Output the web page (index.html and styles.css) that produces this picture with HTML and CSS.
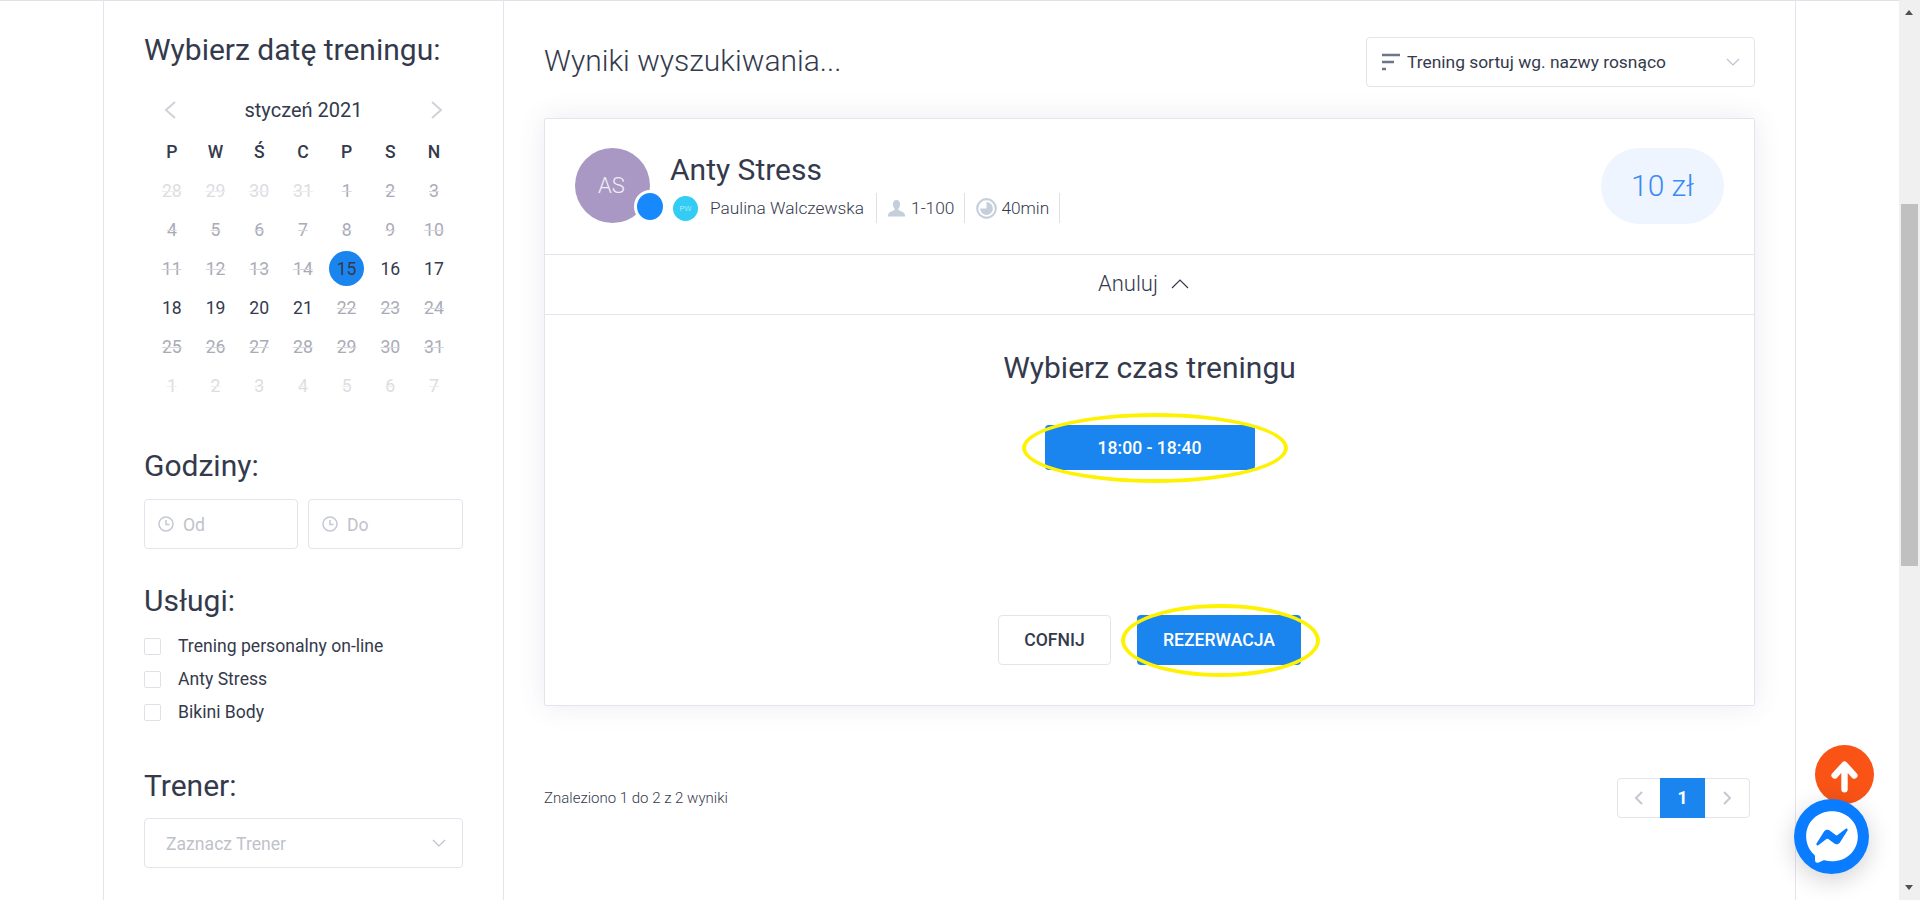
FILE: index.html
```html
<!DOCTYPE html>
<html lang="pl">
<head>
    <meta charset="UTF-8">
    <meta name="viewport" content="width=device-width, initial-scale=1.0">
    <title>Wyniki wyszukiwania</title>
    <link rel="stylesheet" href="styles.css">
</head>
<body>
    <div class="page">
        <div class="layout">
            <aside class="sidebar">
                <h2 class="side-title">Wybierz datę treningu:</h2>

                <div class="month-row">
                    <svg class="month-arrow" viewBox="0 0 14 20"><path d="M12 2 3 10l9 8"/></svg>
                    <span>styczeń 2021</span>
                    <svg class="month-arrow" viewBox="0 0 14 20"><path d="M2 2l9 8-9 8"/></svg>
                </div>

                <div class="calendar">
                    <b>P</b><b>W</b><b>Ś</b><b>C</b><b>P</b><b>S</b><b>N</b>
                    <s class="out">28</s><s class="out">29</s><s class="out">30</s><s class="out">31</s><s>1</s><s>2</s><s>3</s>
                    <s>4</s><s>5</s><s>6</s><s>7</s><s>8</s><s>9</s><s>10</s>
                    <s>11</s><s>12</s><s>13</s><s>14</s><span class="today"><i>15</i></span><span>16</span><span>17</span>
                    <span>18</span><span>19</span><span>20</span><span>21</span><s>22</s><s>23</s><s>24</s>
                    <s>25</s><s>26</s><s>27</s><s>28</s><s>29</s><s>30</s><s>31</s>
                    <s class="out">1</s><s class="out">2</s><s class="out">3</s><s class="out">4</s><s class="out">5</s><s class="out">6</s><s class="out">7</s>
                </div>

                <h2 class="side-title hours-title">Godziny:</h2>
                <div class="hours">
                    <div class="field">
                        <svg class="clock-icon" viewBox="0 0 16 16"><circle cx="8" cy="8" r="7"/><path d="M8 4v4.500h3.500"/></svg>
                        <span>Od</span>
                    </div>
                    <div class="field">
                        <svg class="clock-icon" viewBox="0 0 16 16"><circle cx="8" cy="8" r="7"/><path d="M8 4v4.500h3.500"/></svg>
                        <span>Do</span>
                    </div>
                </div>

                <h2 class="side-title services-title">Usługi:</h2>
                <ul class="services">
                    <li><span class="check"></span>Trening personalny on-line</li>
                    <li><span class="check"></span>Anty Stress</li>
                    <li><span class="check"></span>Bikini Body</li>
                </ul>

                <h2 class="side-title trainer-title">Trener:</h2>
                <div class="field trainer-select">
                    <span>Zaznacz Trener</span>
                    <svg class="chevron" viewBox="0 0 14 8"><path d="M1 1l6 6 6-6"/></svg>
                </div>
            </aside>

            <main class="results">
                <div class="results-head">
                    <h1>Wyniki wyszukiwania...</h1>
                    <div class="sort-box">
                        <svg class="sort-icon" viewBox="0 0 18 20"><path d="M0 3h18M0 10h12M0 17h4"/></svg>
                        <span>Trening sortuj wg. nazwy rosnąco</span>
                        <svg class="chevron" viewBox="0 0 14 8"><path d="M1 1l6 6 6-6"/></svg>
                    </div>
                </div>

                <section class="card">
                    <header class="card-head">
                        <div class="avatar">AS<span class="avatar-dot"></span></div>
                        <div class="card-info">
                            <h3>Anty Stress</h3>
                            <div class="meta">
                                <div class="meta-item trainer">
                                    <span class="trainer-badge">PW</span>
                                    <span>Paulina Walczewska</span>
                                </div>
                                <div class="meta-item">
                                    <svg class="person-icon" viewBox="0 0 16 16"><path d="M8 0c2.300 0 3.400 1.700 3.400 3.900 0 1.700-.8 3.100-1.500 3.900v1.700c0 .7 5.600 1.500 6.100 4.500v1.500H0v-1.500c.5-3 6.100-3.800 6.100-4.500V7.800C5.400 7 4.600 5.600 4.600 3.900 4.600 1.700 5.700 0 8 0z"/></svg>
                                    <span>1-100</span>
                                </div>
                                <div class="meta-item">
                                    <svg class="pie-icon" viewBox="0 0 18 18"><circle class="pie-ring" cx="9" cy="9" r="8"/><path class="pie-fill" d="M9 3.500a5.500 5.500 0 1 1-5.500 5.500h5.500z"/></svg>
                                    <span>40min</span>
                                </div>
                            </div>
                        </div>
                        <div class="price">10 zł</div>
                    </header>

                    <div class="cancel-row">
                        <span>Anuluj</span>
                        <svg viewBox="0 0 18 10"><path d="M1 9l8-8 8 8"/></svg>
                    </div>

                    <div class="card-body">
                        <h4>Wybierz czas treningu</h4>
                        <div class="time-slot">
                            <button class="btn-primary slot-btn">18:00 - 18:40</button>
                            <span class="mark mark-slot"></span>
                        </div>
                        <div class="actions">
                            <button class="btn-outline">COFNIJ</button>
                            <div class="reserve">
                                <button class="btn-primary reserve-btn">REZERWACJA</button>
                                <span class="mark mark-reserve"></span>
                            </div>
                        </div>
                    </div>
                </section>

                <div class="results-foot">
                    <span class="found">Znaleziono 1 do 2 z 2 wyniki</span>
                    <div class="pager">
                        <span class="pager-item prev"><svg viewBox="0 0 10 14"><path d="M8 1 2 7l6 6"/></svg></span>
                        <span class="pager-item active">1</span>
                        <span class="pager-item"><svg viewBox="0 0 10 14"><path d="M2 1l6 6-6 6"/></svg></span>
                    </div>
                </div>
            </main>
        </div>

        <a class="to-top">
            <svg viewBox="0 0 60 60"><path d="M30 45V20M20 31l10-11 10 11"/></svg>
        </a>
        <a class="messenger">
            <svg viewBox="0 0 24 24"><path d="M12 2C6.360 2 2 6.130 2 11.700c0 2.910 1.190 5.440 3.140 7.170.160.130.260.350.270.570l.050 1.780c.040.570.600.940 1.130.710l1.980-.870c.170-.060.360-.090.530-.060.900.270 1.900.400 2.900.400 5.640 0 10-4.130 10-9.700S17.640 2 12 2zm6 7.460-2.930 4.670c-.470.730-1.470.920-2.160.370l-2.340-1.730a.6.6 0 0 0-.72 0l-3.160 2.400c-.420.330-.970-.170-.690-.610l2.930-4.670c.470-.730 1.470-.920 2.160-.400l2.340 1.760a.6.6 0 0 0 .72 0l3.160-2.400c.420-.330.970.170.690.610z"/></svg>
        </a>
    </div>

    <div class="scrollbar">
        <span class="scroll-up"></span>
        <span class="scroll-thumb"></span>
        <span class="scroll-down"></span>
    </div>
</body>
</html>
```

FILE: styles.css
```css
* {
    box-sizing: border-box;
}
html, body {
    height: 100%;
}
body {
    font-family: Roboto, "Liberation Sans", sans-serif;
    margin: 0;
    display: flex;
    overflow: hidden;
    background: #fff;
    color: #343a4c;
}
h1, h2, h3, h4, ul {
    margin: 0;
    padding: 0;
    font-weight: 400;
}
svg {
    display: block;
    fill: none;
}

.page {
    flex: 1;
    position: relative;
    border-top: 1px solid #e0e1e8;
}
.layout {
    display: flex;
    margin-left: 103px;
    width: 1693px;
    height: 899px;
    border-left: 1px solid #e3e4ec;
    border-right: 1px solid #e3e4ec;
}

/* lewa kolumna */
.sidebar {
    width: 400px;
    padding: 32px 40px 0 40px;
    border-right: 1px solid #e3e4ec;
}
.side-title {
    font-size: 30px;
    line-height: 34px;
}
.month-row {
    display: flex;
    align-items: center;
    justify-content: space-between;
    width: 281px;
    height: 30px;
    margin: 28px 0 8px 19px;
    font-size: 20px;
}
.month-arrow {
    width: 14px;
    height: 20px;
}
.month-arrow path {
    stroke: #d0d2d9;
    stroke-width: 2;
}
.calendar {
    display: grid;
    grid-template-columns: repeat(7, 43.7px);
    grid-template-rows: 38px;
    grid-auto-rows: 39px;
    margin-left: 6px;
    font-size: 17.6px;
    text-align: center;
}
.calendar > * {
    display: flex;
    align-items: center;
    justify-content: center;
}
.calendar b {
    font-weight: 500;
    font-size: 17.6px;
}
.calendar s {
    color: #a9abb6;
    text-decoration-thickness: 1px;
    text-decoration-color: #d6d7dd;
}
.calendar s.out {
    color: #dcdde2;
    text-decoration-color: #ecedf0;
}
.today i {
    display: flex;
    align-items: center;
    justify-content: center;
    width: 35px;
    height: 35px;
    border-radius: 50%;
    background: #1a85ee;
    font-style: normal;
}
.hours-title {
    margin-top: 44px;
}
.hours {
    display: grid;
    grid-template-columns: 154px 155px;
    gap: 10px;
    margin-top: 16px;
}
.field {
    display: flex;
    align-items: center;
    height: 50px;
    padding-left: 13px;
    border: 1px solid #e3e4ec;
    border-radius: 4px;
    font-size: 17.6px;
    color: #bfc2cb;
}
.field span {
    padding-top: 2px;
}
.clock-icon {
    width: 16px;
    height: 16px;
    margin-right: 9px;
}
.clock-icon circle, .clock-icon path {
    stroke: #c3c8d3;
    stroke-width: 1.5;
}
.services-title {
    margin-top: 35px;
}
.services {
    margin-top: 12px;
    list-style: none;
}
.services li {
    display: flex;
    align-items: center;
    height: 33px;
    padding-bottom: 2px;
    font-size: 17.6px;
}
.check {
    width: 17px;
    height: 17px;
    margin: 2px 17px 0 0;
    border: 1px solid #e0e1e8;
    border-radius: 2px;
}
.trainer-title {
    margin-top: 40px;
}
.trainer-select {
    justify-content: space-between;
    margin-top: 15px;
    padding: 0 16px 0 21px;
}
.chevron {
    width: 14px;
    height: 8px;
}
.chevron path {
    stroke: #bfc2cb;
    stroke-width: 1.2;
}

/* wyniki */
.results {
    flex: 1;
    padding: 36px 40px 0 40px;
}
.results-head {
    display: flex;
    align-items: center;
    justify-content: space-between;
    height: 50px;
}
.results-head h1 {
    margin-bottom: 4px;
    font-size: 30px;
    font-weight: 300;
}
.sort-box {
    display: flex;
    align-items: center;
    width: 389px;
    height: 50px;
    padding: 0 14px 0 15px;
    border: 1px solid #e3e4ec;
    border-radius: 4px;
    font-size: 17.4px;
}
.sort-box span {
    flex: 1;
}
.sort-icon {
    width: 18px;
    height: 20px;
    margin-right: 7px;
}
.sort-icon path {
    stroke: #6b7686;
    stroke-width: 2.4;
}
.card {
    margin-top: 31px;
    height: 588px;
    border: 1px solid #e3e4ec;
    border-radius: 2px;
    box-shadow: 0 0 28px rgba(60, 70, 120, 0.11);
}
.card-head {
    display: flex;
    height: 136px;
    padding: 29px 30px 0 30px;
    border-bottom: 1px solid #e3e4ec;
}
.avatar {
    position: relative;
    display: flex;
    align-items: center;
    justify-content: center;
    width: 75px;
    height: 75px;
    padding-right: 2px;
    border-radius: 50%;
    background: #a898c3;
    color: #f0edf5;
    font-size: 22px;
    font-weight: 300;
}
.avatar-dot {
    position: absolute;
    right: -16px;
    bottom: 0;
    width: 32px;
    height: 33px;
    border: 3px solid #fff;
    border-radius: 50%;
    background: #1789fc;
}
.card-info {
    flex: 1;
    margin-left: 20px;
}
.card-info h3 {
    font-size: 30px;
    line-height: 36px;
    margin-top: 4px;
}
.meta {
    display: flex;
    margin-top: 5px;
    font-size: 17.3px;
    font-weight: 300;
}
.meta-item {
    display: flex;
    align-items: center;
    height: 30px;
    padding: 0 10px 0 11px;
    border-right: 1px solid #dfe1e8;
}
.meta-item.trainer {
    padding: 0 12px 0 3px;
}
.trainer-badge {
    display: flex;
    align-items: center;
    justify-content: center;
    width: 25px;
    height: 25px;
    margin-right: 12px;
    border-radius: 50%;
    background: #33ccf5;
    color: #d0f3fd;
    font-size: 8px;
}
.person-icon {
    width: 17px;
    height: 17px;
    margin-right: 6px;
    fill: #c5cfdc;
}
.pie-icon {
    width: 21px;
    height: 21px;
    margin-right: 4px;
}
.pie-ring {
    stroke: #c5cfdc;
    stroke-width: 1.8;
}
.pie-fill {
    fill: #c5cfdc;
}
.price {
    display: flex;
    align-items: center;
    justify-content: center;
    width: 123px;
    height: 76px;
    padding-bottom: 2px;
    border-radius: 38px;
    background: #eef5fe;
    color: #3a8bf2;
    font-size: 30px;
    font-weight: 300;
}
.cancel-row {
    display: flex;
    align-items: center;
    justify-content: center;
    gap: 13px;
    height: 60px;
    padding: 0 12px 2px 0;
    border-bottom: 1px solid #e3e4ec;
    font-size: 22px;
    font-weight: 300;
}
.cancel-row svg {
    width: 18px;
    height: 10px;
}
.cancel-row path {
    stroke: #343a4c;
    stroke-width: 1.2;
}
.card-body {
    display: flex;
    flex-direction: column;
    align-items: center;
}
.card-body h4 {
    margin-top: 36px;
    font-size: 30px;
    line-height: 34px;
}
.time-slot {
    position: relative;
    margin-top: 40px;
}
button {
    display: block;
    font-family: inherit;
    font-size: 17.6px;
    font-weight: 500;
    border-radius: 4px;
    cursor: pointer;
}
.btn-primary {
    border: 0;
    background: #1a85ee;
    color: #fff;
}
.slot-btn {
    width: 210px;
    height: 45px;
}
.actions {
    display: flex;
    gap: 26px;
    margin-top: 145px;
}
.btn-outline {
    width: 113px;
    height: 50px;
    border: 1px solid #e3e4ec;
    background: #fff;
    color: #343a4c;
}
.reserve {
    position: relative;
}
.reserve-btn {
    width: 164px;
    height: 50px;
}
.mark {
    position: absolute;
    border: 4px solid #fff200;
    border-radius: 50%;
    pointer-events: none;
}
.mark-slot {
    inset: -12px -33px -13px -23px;
}
.mark-reserve {
    inset: -11px -19px -12px -16px;
}
.results-foot {
    display: flex;
    align-items: center;
    justify-content: space-between;
    margin-top: 72px;
    padding-right: 5px;
}
.found {
    font-size: 15px;
    font-weight: 300;
}
.pager {
    display: flex;
    height: 40px;
    border: 1px solid #e3e4ec;
    border-radius: 4px;
}
.pager-item {
    display: flex;
    align-items: center;
    justify-content: center;
    width: 44px;
}
.pager-item.prev {
    width: 42px;
}
.pager-item svg {
    width: 10px;
    height: 14px;
}
.pager-item path {
    stroke: #c3c8d3;
    stroke-width: 2;
}
.pager-item.active {
    width: 45px;
    margin: -1px 0;
    background: #1a85ee;
    color: #fff;
    font-weight: 700;
    font-size: 17.6px;
}

/* pływające przyciski */
.to-top {
    position: absolute;
    left: 1815px;
    top: 744px;
    width: 59px;
    height: 59px;
    border-radius: 50%;
    background: #f95316;
}
.to-top path {
    stroke: #fff;
    stroke-width: 6.5;
    stroke-linecap: round;
    stroke-linejoin: round;
}
.messenger {
    position: absolute;
    left: 1794px;
    top: 798px;
    display: flex;
    align-items: center;
    justify-content: center;
    width: 75px;
    height: 75px;
    border-radius: 50%;
    background: #0a7cff;
    box-shadow: 0 6px 24px rgba(0, 0, 0, 0.18);
}
.messenger svg {
    width: 62px;
    height: 62px;
    fill: #fff;
}

/* pasek przewijania */
.scrollbar {
    position: relative;
    width: 21px;
    height: 100%;
    background: #f0f0f0;
}
.scroll-thumb {
    position: absolute;
    left: 2px;
    right: 2px;
    top: 204px;
    height: 362px;
    background: #c0c0c0;
}
.scroll-up, .scroll-down {
    position: absolute;
    left: 6px;
    border-left: 4.5px solid transparent;
    border-right: 4.5px solid transparent;
}
.scroll-up {
    top: 10px;
    border-bottom: 5px solid #505050;
}
.scroll-down {
    bottom: 10px;
    border-top: 5px solid #505050;
}
```
